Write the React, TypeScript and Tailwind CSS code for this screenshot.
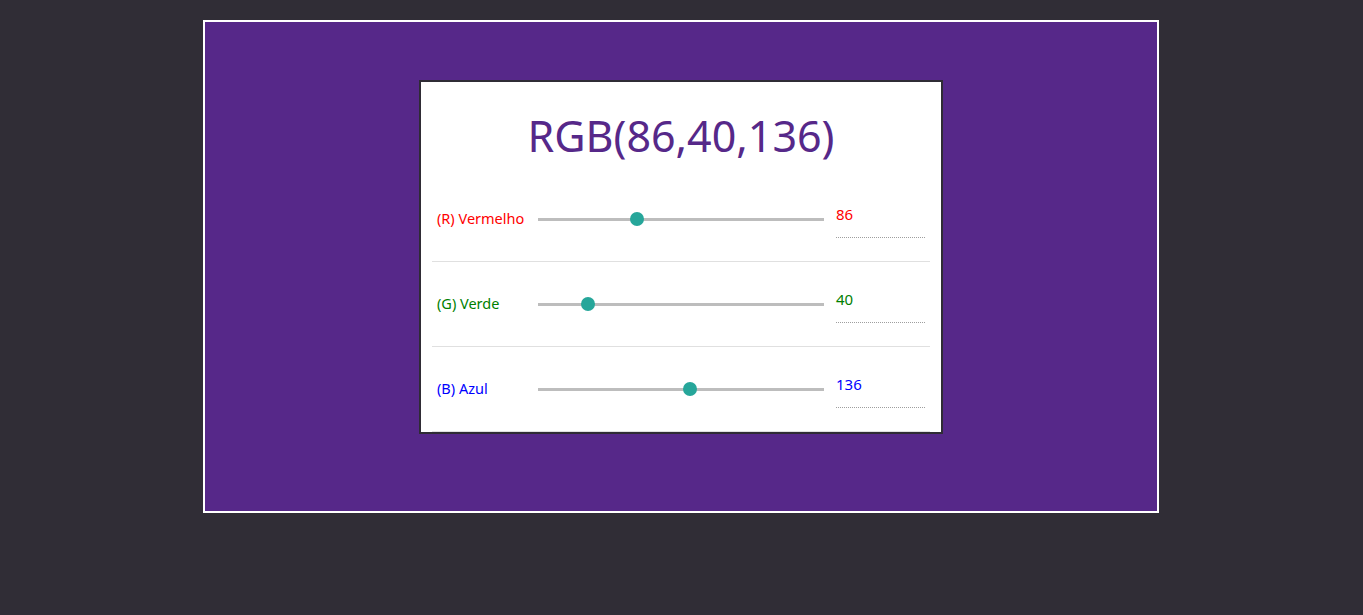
import React from "react";

const channels = [
  { key: "R", label: "(R) Vermelho", value: 86, color: "text-[#ff0000]" },
  { key: "G", label: "(G) Verde", value: 40, color: "text-[#008000]" },
  { key: "B", label: "(B) Azul", value: 136, color: "text-[#0000ff]" },
];

function Slider({ value }: { value: number }) {
  return (
    <div className="relative w-[286px] h-[14px] flex items-center shrink-0">
      <div className="w-full h-[3px] bg-[#bdbdbd]" />
      <div
        className="absolute top-0 w-[14px] h-[14px] rounded-full bg-[#26a69a]"
        style={{ left: `${(272 * value) / 255}px` }}
      />
    </div>
  );
}

export default function App() {
  return (
    <div className="min-h-[615px] bg-[#302d36] pt-5 font-['Noto_Sans',sans-serif]">
      <div className="ml-[203px] w-[956px] h-[493px] border-2 border-white bg-[#562889] pt-[58px]">
        <div className="ml-[214px] w-[524px] border-2 border-[#2f2c35] bg-white px-[11px]">
          <h1 className="text-center text-[43px] leading-[50px] text-[#562889] pt-[29px] pb-[16px]">
            RGB(86,40,136)
          </h1>
          {channels.map((c) => (
            <div
              key={c.key}
              className="h-[85px] flex items-center px-[5px] border-b border-[#e0e0e0]"
            >
              <span className={`w-[101px] shrink-0 text-[14.5px] ${c.color}`}>{c.label}</span>
              <Slider value={c.value} />
              <div className="ml-3 w-[89px] mb-2 h-[46px] flex items-center border-b border-dotted border-[#9e9e9e]">
                <span className={`text-[15px] ${c.color}`}>{c.value}</span>
              </div>
            </div>
          ))}
        </div>
      </div>
    </div>
  );
}
